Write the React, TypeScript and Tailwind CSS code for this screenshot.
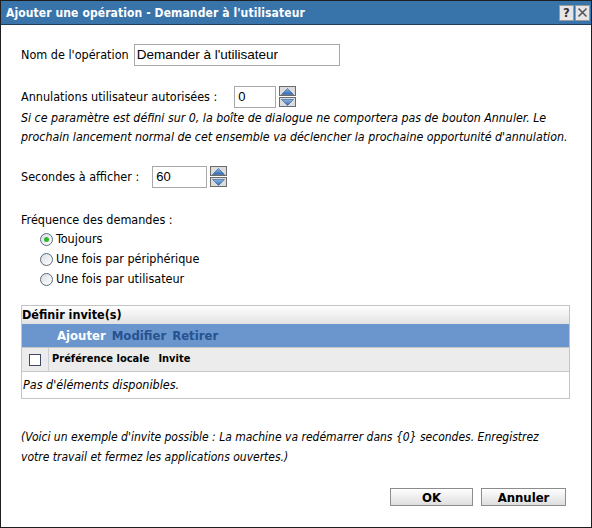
import React from 'react';

const font = 'font-["DejaVu_Sans_Condensed","DejaVu_Sans",sans-serif]';

const Spinner = () => (
  <div className="flex flex-col gap-[1px] ml-[3px]">
    {['up', 'down'].map((d) => (
      <div key={d} className="w-[17px] h-[10px] bg-[#dcdcdc] border border-[#6b6b6b] flex items-center justify-center">
        <svg width="13" height="7" viewBox="0 0 13 7">
          <defs>
            <linearGradient id={`g-${d}`} x1="0" y1="0" x2="0" y2="1">
              <stop offset="0" stopColor="#8fb6e0" />
              <stop offset="1" stopColor="#2f69ad" />
            </linearGradient>
          </defs>
          {d === 'up' ? (
            <polygon points="6.5,0.5 12.5,6.5 0.5,6.5" fill={`url(#g-${d})`} stroke="#2a5f9e" strokeWidth="0.6" />
          ) : (
            <polygon points="0.5,0.5 12.5,0.5 6.5,6.5" fill={`url(#g-${d})`} stroke="#2a5f9e" strokeWidth="0.6" />
          )}
        </svg>
      </div>
    ))}
  </div>
);

const Radio = ({ checked, label }: { checked?: boolean; label: string }) => (
  <div className="flex items-center h-[20px]">
    <span className="w-[13px] h-[13px] rounded-full border border-[#5a6a7a] bg-gradient-to-br from-[#d8dde3] to-white flex items-center justify-center">
      {checked && <span className="w-[5px] h-[5px] rounded-full bg-[#2fb52f]" />}
    </span>
    <span className="ml-[3px]">{label}</span>
  </div>
);

const NumberField = ({ value, width }: { value: string; width: string }) => (
  <div className="flex items-start">
    <div className={`${width} h-[22px] border border-[#a8a8a8] flex items-center pl-[3px] font-["Liberation_Sans",sans-serif] text-[13px]`}>
      {value}
    </div>
    <Spinner />
  </div>
);

export default function App() {
  return (
    <div className={`w-[592px] h-[528px] bg-white border border-[#1e1e1e] flex flex-col text-[12.5px] text-black ${font}`}>
      {/* Title bar */}
      <div className="h-[24px] bg-[#3874aa] border-b border-[#1e3d5c] flex items-center justify-between pl-[5px] pr-[1px] shrink-0">
        <span className="text-white font-bold text-[12px] tracking-[0.1px]">Ajouter une opération - Demander à l'utilisateur</span>
        <div className="flex gap-[1px]">
          <span className="w-[15px] h-[16px] bg-[#e6e6e6] border border-[#9a9a9a] flex items-center justify-center text-[13px] font-bold text-[#333] leading-none">?</span>
          <span className="w-[15px] h-[16px] bg-[#e6e6e6] border border-[#9a9a9a] flex items-center justify-center">
            <svg width="11" height="11" viewBox="0 0 11 11">
              <path d="M1.5 1.5 L9.5 9.5 M9.5 1.5 L1.5 9.5" stroke="#555" strokeWidth="1.6" />
            </svg>
          </span>
        </div>
      </div>

      <div className="flex-1 flex flex-col pl-[20px] pr-[21px]">
        <div className="flex items-center mt-[19px]">
          <span>Nom de l'opération</span>
          <div className="ml-[5px] w-[206px] h-[22px] border border-[#a8a8a8] flex items-center pl-[2px] font-['Liberation_Sans',sans-serif] text-[13.5px]">
            Demander à l'utilisateur
          </div>
        </div>

        <div className="flex items-center mt-[20px]">
          <span className="mr-[17px]">Annulations utilisateur autorisées :</span>
          <NumberField value="0" width="w-[42px]" />
        </div>
        <p className="italic leading-[19px] mt-[1px] text-[12.3px] whitespace-nowrap">
          Si ce paramètre est défini sur 0, la boîte de dialogue ne comportera pas de bouton Annuler. Le
          <br />
          prochain lancement normal de cet ensemble va déclencher la prochaine opportunité d'annulation.
        </p>

        <div className="flex items-center mt-[19px]">
          <span className="mr-[13px]">Secondes à afficher :</span>
          <NumberField value="60" width="w-[55px]" />
        </div>

        <div className="mt-[23px] leading-[18px]">Fréquence des demandes :</div>
        <div className="pl-[19px]">
          <Radio checked label="Toujours" />
          <Radio label="Une fois par périphérique" />
          <Radio label="Une fois par utilisateur" />
        </div>

        {/* Prompts table */}
        <div className="mt-[16px] border border-[#c4c4c4]">
          <div className="h-[18px] bg-gradient-to-b from-white to-[#e2e2e2] flex items-center font-bold">Définir invite(s)</div>
          <div className="h-[23px] bg-[#6a96cd] flex items-center pl-[35px] gap-[6px] font-bold text-[13px]">
            <span className="text-white">Ajouter</span>
            <span className="text-[#27528f]">Modifier</span>
            <span className="text-[#27528f]">Retirer</span>
          </div>
          <div className="h-[25px] bg-[#ececec] border-t border-b border-[#c8c8c8] flex items-center font-bold text-[11px]">
            <div className="w-[27px] h-full border-r border-[#cfcfcf] flex items-center justify-center">
              <span className="w-[12px] h-[12px] border border-[#3d4a66] bg-white" />
            </div>
            <span className="ml-[3px]">Préférence locale</span>
            <span className="ml-[9px]">Invite</span>
          </div>
          <div className="h-[26px] flex items-center italic pl-[1px]">Pas d'éléments disponibles.</div>
        </div>

        <p className="italic leading-[20px] mt-[28px] text-[12px]">
          {"(Voici un exemple d'invite possible : La machine va redémarrer dans {0} secondes. Enregistrez votre travail et fermez les applications ouvertes.)"}
        </p>

        <div className="flex justify-end gap-[8px] mt-[21px] pr-[4px]">
          <button className="w-[83px] h-[18px] border border-[#8c8c8c] bg-gradient-to-b from-white to-[#dedede] font-bold text-[13px] leading-none">OK</button>
          <button className="w-[85px] h-[18px] border border-[#8c8c8c] bg-gradient-to-b from-white to-[#dedede] font-bold text-[13px] leading-none">Annuler</button>
        </div>
      </div>
    </div>
  );
}
